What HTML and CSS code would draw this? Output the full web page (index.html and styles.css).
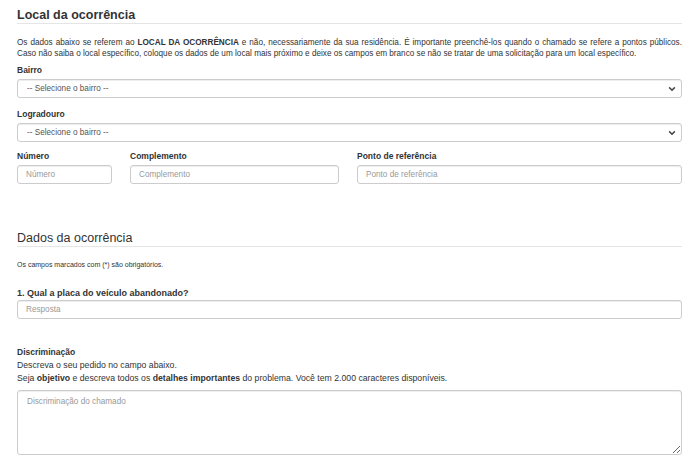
FILE: index.html
```html
<!DOCTYPE html>
<html lang="pt-BR">
<head>
    <meta charset="UTF-8">
    <meta name="viewport" content="width=device-width, initial-scale=1.0">
    <title>Novo chamado</title>
    <link rel="stylesheet" href="styles.css">
</head>
<body>
    <div class="page">
        <!-- Endereço da ocorrência -->
        <section class="local">
            <h2 class="section-title strong">Local da ocorrência</h2>
            <div class="intro">
                <p class="intro-line">Os dados abaixo se referem ao <b>LOCAL DA OCORRÊNCIA</b> e não, necessariamente da sua residência. É importante preenchê-los quando o chamado se refere a pontos públicos.</p>
                <p>Caso não saiba o local específico, coloque os dados de um local mais próximo e deixe os campos em branco se não se tratar de uma solicitação para um local específico.</p>
            </div>

            <div class="field field-bairro">
                <label for="bairro">Bairro</label>
                <div class="select-wrap">
                    <select id="bairro">
                        <option>-- Selecione o bairro --</option>
                    </select>
                    <svg class="chevron" width="8" height="6" viewBox="0 0 8 6"><path d="M1.2 1.4 L4 4.2 L6.8 1.4" fill="none" stroke="#444" stroke-width="1.5"/></svg>
                </div>
            </div>

            <div class="field field-logradouro">
                <label for="logradouro">Logradouro</label>
                <div class="select-wrap">
                    <select id="logradouro">
                        <option>-- Selecione o bairro --</option>
                    </select>
                    <svg class="chevron" width="8" height="6" viewBox="0 0 8 6"><path d="M1.2 1.4 L4 4.2 L6.8 1.4" fill="none" stroke="#444" stroke-width="1.5"/></svg>
                </div>
            </div>

            <div class="address-row">
                <div class="field">
                    <label for="numero">Número</label>
                    <input type="text" id="numero" placeholder="Número">
                </div>
                <div class="field">
                    <label for="complemento">Complemento</label>
                    <input type="text" id="complemento" placeholder="Complemento">
                </div>
                <div class="field">
                    <label for="referencia">Ponto de referência</label>
                    <input type="text" id="referencia" placeholder="Ponto de referência">
                </div>
            </div>
        </section>

        <!-- Perguntas do serviço -->
        <section class="dados">
            <h2 class="section-title">Dados da ocorrência</h2>
            <p class="required-note">Os campos marcados com (*) são obrigatórios.</p>

            <div class="field field-pergunta">
                <label for="placa">1. Qual a placa do veículo abandonado?</label>
                <input type="text" id="placa" placeholder="Resposta">
            </div>

            <div class="field field-discriminacao">
                <label for="discriminacao">Discriminação</label>
                <p class="help">Descreva o seu pedido no campo abaixo.<br>
                Seja <b>objetivo</b> e descreva todos os <b>detalhes importantes</b> do problema. Você tem 2.000 caracteres disponíveis.</p>
                <textarea id="discriminacao" placeholder="Discriminação do chamado"></textarea>
            </div>
        </section>
    </div>
</body>
</html>
```

FILE: styles.css
```css
body {
    margin: 0;
    font-family: "Liberation Sans", Arial, sans-serif;
    color: #333;
    background: #fff;
}

.page {
    padding: 0 18px 0 17px;
}

b {
    font-weight: bold;
}

.section-title {
    margin: 0;
    font-size: 12.5px;
    font-weight: normal;
    line-height: 16px;
    border-bottom: 1px solid #e5e5e5;
}

.section-title.strong {
    font-size: 12.5px;
    font-weight: bold;
}

.local .section-title {
    margin-top: 7px;
}

.intro {
    margin-top: 13px;
    font-size: 8.2px;
    line-height: 11px;
}

.intro p {
    margin: 0;
}

/* first sentence fills the whole width */
.intro .intro-line {
    text-align: justify;
    text-align-last: justify;
}

.field label {
    display: block;
    font-size: 8.5px;
    font-weight: bold;
    line-height: 12px;
}

.field-bairro {
    margin-top: 5px;
}

.field-logradouro {
    margin-top: 10px;
}

/* Inputs in the bootstrap look */
input, select, textarea {
    display: block;
    width: 100%;
    box-sizing: border-box;
    margin: 3px 0 0;
    height: 19px;
    padding: 0 8px 0 9px;
    font-family: "Liberation Sans", Arial, sans-serif;
    font-size: 8.2px;
    color: #555;
    background: #fff;
    border: 1px solid #ccc;
    border-radius: 3px;
    box-shadow: inset 0 1px 1px rgba(0,0,0,0.075);
    outline: none;
}

input {
    padding-left: 8px;
}

input::placeholder, textarea::placeholder {
    color: #999;
}

select {
    appearance: none;
    -webkit-appearance: none;
}

.select-wrap {
    position: relative;
}

.chevron {
    position: absolute;
    right: 6px;
    top: 7px;
}

.address-row {
    display: grid;
    grid-template-columns: 95px 209px 1fr;
    column-gap: 18px;
    margin-top: 8px;
}

.dados {
    margin-top: 46px;
}

.required-note {
    margin: 13px 0 0;
    font-size: 7px;
    line-height: 10px;
}

.field-pergunta {
    margin-top: 17px;
}

.field-pergunta label {
    font-size: 9px;
}

.field-pergunta input {
    margin-top: 1px;
}

.field-discriminacao {
    margin-top: 27px;
}

.help {
    margin: 1px 0 0;
    font-size: 8.7px;
    line-height: 13px;
}

textarea {
    height: 65px;
    margin-top: 5px;
    padding: 6px 9px;
    resize: vertical;
}
```
